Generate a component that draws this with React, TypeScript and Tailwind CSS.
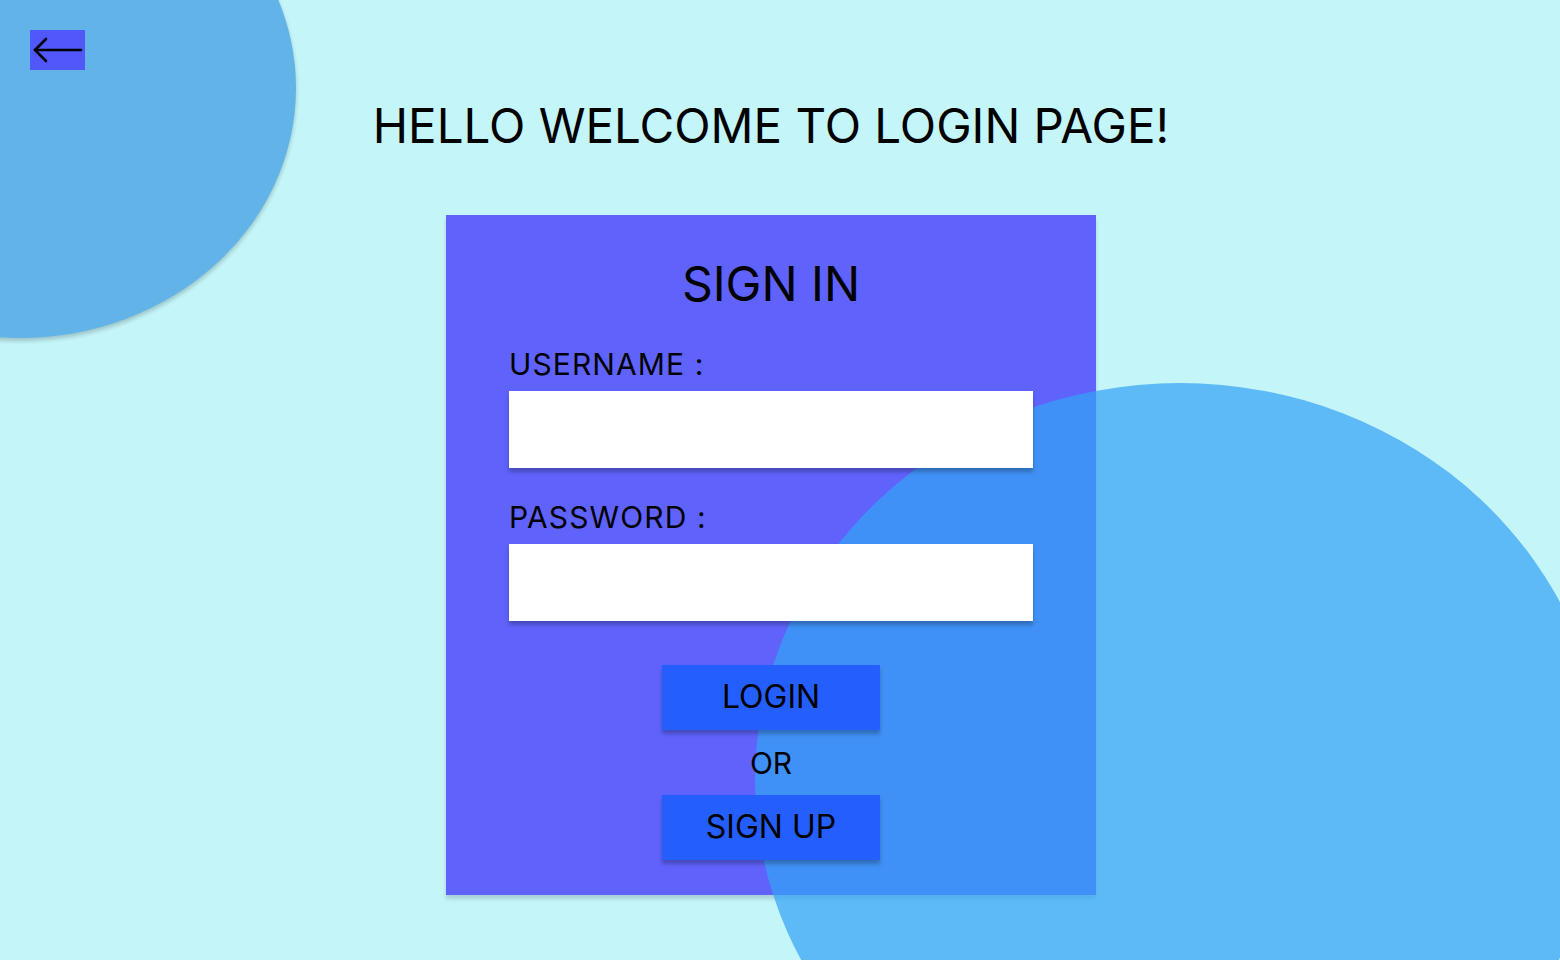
// App.tsx
export default function App() {
  return (
    <div className="relative h-[960px] w-full overflow-hidden bg-[#c4f5f9] font-['Inter','Noto_Sans',sans-serif] text-black">
      {/* 왼쪽 위 장식 원 */}
      <div className="absolute left-[-256px] top-[-162px] h-[500px] w-[552px] rounded-[50%] bg-[#62b4e8] shadow-[0_3px_4px_rgba(0,0,0,0.2)]" />

      {/* 오른쪽 아래 큰 원 (카드 배경 위, 카드 내용 아래) */}
      <div className="absolute left-[755px] top-[383px] z-10 h-[794px] w-[850px] rounded-[50%] bg-[#35a3f5]/72" />

      <div className="relative flex flex-col px-[30px] pt-[30px]">
        {/* 뒤로 가기 */}
        <button className="flex h-[40px] w-[55px] items-center justify-center bg-[#5157fb]">
          <svg width="50" height="26" viewBox="0 0 50 26" fill="none" stroke="black" strokeWidth="2.6" strokeLinecap="round" strokeLinejoin="round">
            <path d="M48 13 H2" />
            <path d="M13 2 L2 13 L13 24" />
          </svg>
        </button>

        <div className="flex flex-col items-center pr-[18px]">
          <h1 className="mt-[32px] text-[47.5px] leading-none font-normal">HELLO WELCOME TO LOGIN PAGE!</h1>

          {/* 로그인 카드 */}
          <div className="mt-[65px] flex h-[680px] w-[650px] flex-col bg-[#5f63fc] px-[63px] pt-[45px] shadow-[0_4px_4px_rgba(0,0,0,0.15)]">
            <h2 className="relative z-20 text-center text-[48px] leading-none font-normal">SIGN IN</h2>

            <label className="relative z-20 mt-[41px] text-[30px] leading-none tracking-[1.1px]">USERNAME :</label>
            <input className="relative z-20 mt-[12px] h-[77px] w-full bg-white shadow-[0_4px_4px_rgba(0,0,0,0.25)] outline-none" />

            <label className="relative z-20 mt-[34px] text-[30px] leading-none tracking-[1.1px]">PASSWORD :</label>
            <input type="password" className="relative z-20 mt-[12px] h-[77px] w-full bg-white shadow-[0_4px_4px_rgba(0,0,0,0.25)] outline-none" />

            <div className="relative z-20 mt-[44px] flex flex-col items-center">
              <button className="flex h-[65px] w-[218px] items-center justify-center bg-[#245ffe] text-[32px] leading-none shadow-[0_4px_4px_rgba(0,0,0,0.25)]">
                LOGIN
              </button>
              <span className="mt-[18px] text-[30px] leading-none">OR</span>
              <button className="mt-[17px] flex h-[65px] w-[218px] items-center justify-center bg-[#245ffe] text-[32px] leading-none shadow-[0_4px_4px_rgba(0,0,0,0.25)]">
                SIGN UP
              </button>
            </div>
          </div>
        </div>
      </div>
    </div>
  );
}
